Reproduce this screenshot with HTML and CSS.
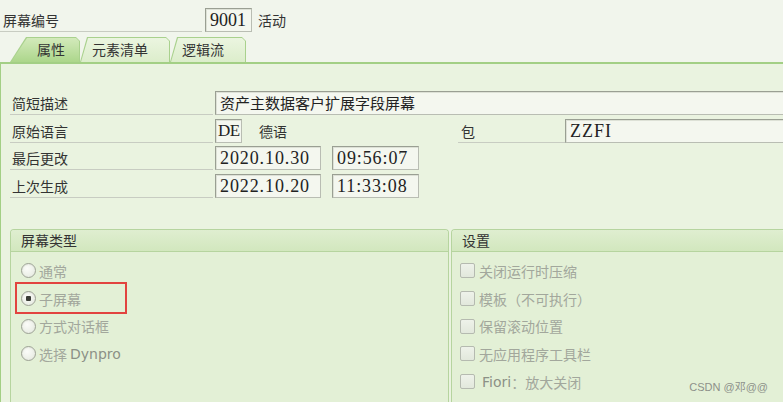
FILE: index.html
```html
<!DOCTYPE html>
<html lang="zh">
<head>
<meta charset="UTF-8">
<meta name="viewport" content="width=device-width, initial-scale=1.0">
<title>屏幕属性</title>
<link rel="stylesheet" href="styles.css">
</head>
<body>

<div class="top">
    <div class="lbl top-lbl">屏幕编号</div>
    <div class="fld num">9001</div>
    <span class="txt status">活动</span>
</div>

<div class="tabs">
    <div class="tab tab-attr active"><div class="face">属性</div></div>
    <div class="tab tab-list"><div class="face">元素清单</div></div>
    <div class="tab tab-flow"><div class="face">逻辑流</div></div>
</div>

<div class="panel">
    <div class="form">
        <div class="row">
            <div class="lbl">简短描述</div>
            <div class="fld wide cjk">资产主数据客户扩展字段屏幕</div>
        </div>
        <div class="row">
            <div class="lbl">原始语言</div>
            <div class="fld lang">DE</div>
            <span class="txt lang-name">德语</span>
            <div class="lbl pkg-lbl">包</div>
            <div class="fld pkg">ZZFI</div>
        </div>
        <div class="row">
            <div class="lbl">最后更改</div>
            <div class="fld date">2020.10.30</div>
            <div class="fld time">09:56:07</div>
        </div>
        <div class="row">
            <div class="lbl">上次生成</div>
            <div class="fld date">2022.10.20</div>
            <div class="fld time">11:33:08</div>
        </div>
    </div>

    <div class="groups">
        <div class="group type-group">
            <div class="group-title">屏幕类型</div>
            <ul class="opts">
                <li><span class="radio"></span>通常</li>
                <li><span class="radio checked"></span>子屏幕</li>
                <li><span class="radio"></span>方式对话框</li>
                <li><span class="radio"></span>选择 <span class="latin">Dynpro</span></li>
            </ul>
            <div class="mark"></div>
        </div>
        <div class="group set-group">
            <div class="group-title">设置</div>
            <ul class="opts">
                <li><span class="check"></span>关闭运行时压缩</li>
                <li><span class="check"></span>模板（不可执行）</li>
                <li><span class="check"></span>保留滚动位置</li>
                <li><span class="check"></span>无应用程序工具栏</li>
                <li><span class="check"></span><span class="latin">Fiori</span>：放大关闭</li>
            </ul>
        </div>
    </div>
</div>

<div class="watermark">CSDN @邓@@</div>

</body>
</html>
```

FILE: styles.css
```css
body {
    margin: 0;
    height: 100vh;
    overflow: hidden;
    position: relative;
    display: flex;
    flex-direction: column;
    background-color: #f1f5ec;
    font-family: "Noto Sans CJK SC", sans-serif;
    font-size: 14px;
    color: #333;
}

/* label with underline, SAP style */
.lbl {
    box-sizing: border-box;
    height: 24px;
    line-height: 24px;
    padding-left: 2px;
    border-bottom: 1px solid #c8ccc2;
    flex: none;
}

.fld {
    box-sizing: border-box;
    height: 24px;
    line-height: 22px;
    border: 1px solid #a9ada3;
    border-color: #9a9f93 #b9bdb3 #b9bdb3 #9a9f93;
    background-color: #f4f7ef;
    box-shadow: inset 1px 1px 0 #dde1d6;
    font-family: "Liberation Serif", serif;
    font-size: 18px;
    color: #222;
    padding-left: 4px;
    white-space: nowrap;
    overflow: hidden;
    flex: none;
}

.txt {
    line-height: 24px;
}

/* top line */
.top {
    display: flex;
    padding-top: 8px;
    height: 24px;
    flex: none;
}

.top-lbl {
    width: 202px;
    padding-left: 3px;
    margin-right: 3px;
}

.num {
    width: 47px;
}

.status {
    margin-left: 6px;
}

/* tab strip */
.tabs {
    display: flex;
    margin-top: 5px;
    margin-left: 10px;
    height: 25px;
    flex: none;
}

.tab {
    background-color: #a9d18d;
    clip-path: polygon(7px 0, calc(100% - 4px) 0, 100% 4px, 100% 100%, 0 100%);
    flex: none;
}

.tab .face {
    height: 24px;
    margin: 1px 1px 0 1px;
    line-height: 23px;
    background: linear-gradient(#ebf5e0, #dcedcb);
    clip-path: polygon(7px 0, calc(100% - 3px) 0, 100% 3px, 100% 100%, 0 100%);
    box-sizing: border-box;
    color: #333;
}

.tab-attr {
    width: 70px;
    clip-path: polygon(16px 0, calc(100% - 4px) 0, 100% 4px, 100% 100%, 0 100%);
}

.tab-attr .face {
    padding-left: 26px;
    background: linear-gradient(#d3eabb, #acd68b);
    clip-path: polygon(16px 0, calc(100% - 3px) 0, 100% 3px, 100% 100%, 0 100%);
}

.tab-list {
    width: 90px;
}

.tab-list .face {
    padding-left: 11px;
}

.tab-flow {
    width: 76px;
}

.tab-flow .face {
    padding-left: 11px;
}

/* main panel */
.panel {
    flex: 1;
    display: flex;
    flex-direction: column;
    border-top: 2px solid #a3cf85;
    border-left: 1px solid #a3cf85;
    background-color: #eaf3e0;
    min-height: 0;
}

.form {
    padding-top: 27px;
    padding-left: 9px;
    display: flex;
    flex-direction: column;
    gap: 3.7px;
}

.row {
    display: flex;
}

.row > .lbl:first-child {
    width: 203px;
    margin-right: 2px;
}

.wide {
    flex: 1;
    border-right: none;
}

.cjk {
    font-family: "Noto Sans CJK SC", sans-serif;
    font-size: 15px;
    padding-left: 4px;
}

.lang {
    width: 27px;
    padding-left: 2px;
    font-size: 17px;
    letter-spacing: -0.5px;
}

.lang-name {
    margin-left: 17px;
}

.pkg-lbl {
    margin-left: 171px;
    width: 107px;
    padding-left: 3px;
}

.pkg {
    flex: 1;
    border-right: none;
    letter-spacing: 1px;
}

.date {
    width: 106px;
    letter-spacing: 0.9px;
}

.time {
    width: 87px;
    margin-left: 11px;
    letter-spacing: 0.9px;
}

/* group boxes */
.groups {
    flex: 1;
    display: flex;
    gap: 2px;
    margin-top: 31px;
    padding-left: 9px;
}

.group {
    position: relative;
    box-sizing: border-box;
    border: 1px solid #b6d49f;
    border-bottom: none;
    border-radius: 4px 4px 0 0;
    background-color: #e3f0d6;
}

.type-group {
    width: 439px;
}

.set-group {
    flex: 1;
    border-right: none;
    border-radius: 4px 0 0 0;
}

.group-title {
    height: 21px;
    line-height: 21px;
    padding-left: 10px;
    border-bottom: 1px solid #b6d49f;
    background: linear-gradient(#dfeed0, #d2e7be);
    border-radius: 3px 3px 0 0;
}

.opts {
    list-style: none;
    margin: 0;
    padding: 5px 0 0 10px;
}

.opts li {
    display: flex;
    align-items: center;
    height: 27.7px;
    color: #a2a79c;
}

.latin {
    font-family: "DejaVu Sans", sans-serif;
    font-size: 14px;
    color: #8c9186;
    margin-left: 3px;
}

.radio {
    position: relative;
    box-sizing: border-box;
    width: 15px;
    height: 15px;
    margin-right: 3px;
    border: 1px solid #9da295;
    border-radius: 50%;
    background: radial-gradient(circle at 40% 35%, #fbfcf9, #e3e8dd);
    box-shadow: inset 0 0 0 1px #e8ebe3;
}

.radio.checked::after {
    content: "";
    position: absolute;
    left: 4px;
    top: 4px;
    width: 5px;
    height: 5px;
    background-color: #3a3d36;
    border-radius: 1px;
}

.set-group .opts {
    padding-left: 8px;
}

.check {
    box-sizing: border-box;
    width: 15px;
    height: 15px;
    margin-right: 4px;
    border: 1px solid #b5bab0;
    border-radius: 2px;
    background: linear-gradient(#eef2ea, #e2e8dc);
}

/* highlight frame on the screenshot */
.mark {
    position: absolute;
    left: 4px;
    top: 52px;
    width: 112px;
    height: 32px;
    box-sizing: border-box;
    border: 2px solid #e2443f;
}

.watermark {
    position: absolute;
    right: 15px;
    bottom: 8px;
    font-family: "Liberation Sans", "Noto Sans CJK SC", sans-serif;
    font-size: 11px;
    color: #8d918a;
}
```
